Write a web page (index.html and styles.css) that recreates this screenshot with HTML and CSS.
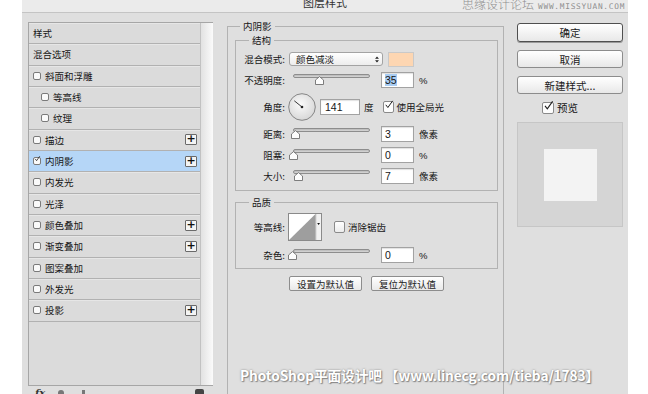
FILE: index.html
```html
<!DOCTYPE html>
<html lang="zh-CN">
<head>
    <meta charset="UTF-8">
    <meta name="viewport" content="width=device-width, initial-scale=1.0">
    <title>图层样式</title>
    <link rel="stylesheet" href="styles.css">
</head>
<body>
    <div class="dialog">
        <div class="titlebar"><div class="title">图层样式</div></div>
        <div class="site-mark"><span class="site-cn">思缘设计论坛</span><span class="site-en">WWW.MISSYUAN.COM</span></div>

        <div class="main">
            <!-- effect list -->
            <div class="side">
                <div class="list">
                    <div class="items">
                        <div class="item">样式</div>
                        <div class="item">混合选项</div>
                        <div class="item"><span class="cb"></span>斜面和浮雕</div>
                        <div class="item sub"><span class="cb"></span>等高线</div>
                        <div class="item sub"><span class="cb"></span>纹理</div>
                        <div class="item"><span class="cb"></span>描边<span class="plus">+</span></div>
                        <div class="item active"><span class="cb"><svg class="tick" viewBox="0 0 10 10"><path d="M2 4.8 L4.3 7.8 L9.6 0.4"/></svg></span>内阴影<span class="plus">+</span></div>
                        <div class="item"><span class="cb"></span>内发光</div>
                        <div class="item"><span class="cb"></span>光泽</div>
                        <div class="item"><span class="cb"></span>颜色叠加<span class="plus">+</span></div>
                        <div class="item"><span class="cb"></span>渐变叠加<span class="plus">+</span></div>
                        <div class="item"><span class="cb"></span>图案叠加</div>
                        <div class="item"><span class="cb"></span>外发光</div>
                        <div class="item"><span class="cb"></span>投影<span class="plus">+</span></div>
                    </div>
                    <div class="scroll"></div>
                </div>
                <div class="foot">
                    <span class="fx">fx</span>
                    <span class="ico up"></span>
                    <span class="ico bar"></span>
                    <span class="ico trash"></span>
                </div>
            </div>

            <!-- settings -->
            <div class="center">
                <fieldset class="group outer">
                    <legend>内阴影</legend>

                    <fieldset class="group">
                        <legend class="sub-legend">结构</legend>
                        <div class="row">
                            <span class="label">混合模式:</span>
                            <span class="select">颜色减淡
                                <svg class="arrows" viewBox="0 0 5 9"><path d="M0 3.5 L2.5 0.5 L5 3.5 Z M0 5.5 L2.5 8.5 L5 5.5 Z"/></svg>
                            </span>
                            <span class="swatch"></span>
                        </div>
                        <div class="row">
                            <span class="label">不透明度:</span>
                            <div class="slider">
                                <svg class="thumb" style="left: 22px" viewBox="0 0 9 9"><path d="M0.5 8.5 V4 L4.5 0.6 L8.5 4 V8.5 Z"/></svg>
                            </div>
                            <span class="num"><span class="hl">35</span></span>
                            <span class="unit">%</span>
                        </div>
                        <div class="row tall">
                            <span class="label">角度:</span>
                            <svg class="dial" viewBox="0 0 28 28">
                                <defs>
                                    <radialGradient id="dialFill" cx="0.45" cy="0.4" r="0.7">
                                        <stop offset="0" stop-color="#fbfbfb"/>
                                        <stop offset="1" stop-color="#d2d2d2"/>
                                    </radialGradient>
                                </defs>
                                <circle cx="14" cy="14" r="13.3" fill="url(#dialFill)" stroke="#7c7c7c" stroke-width="0.9"/>
                                <line x1="14" y1="14" x2="6.3" y2="7.8" stroke="#222" stroke-width="0.9"/>
                                <circle cx="14" cy="14" r="1.3" fill="#222"/>
                            </svg>
                            <span class="num wide">141</span>
                            <span class="unit deg">度</span>
                            <span class="check"><svg class="tick" viewBox="0 0 10 10"><path d="M2 4.8 L4.3 7.8 L9.6 0.4"/></svg></span>
                            <span class="check-text">使用全局光</span>
                        </div>
                        <div class="row">
                            <span class="label">距离:</span>
                            <div class="slider">
                                <svg class="thumb" style="left: -2px" viewBox="0 0 9 9"><path d="M0.5 8.5 V4 L4.5 0.6 L8.5 4 V8.5 Z"/></svg>
                            </div>
                            <span class="num">3</span>
                            <span class="unit">像素</span>
                        </div>
                        <div class="row">
                            <span class="label">阻塞:</span>
                            <div class="slider">
                                <svg class="thumb" style="left: -4px" viewBox="0 0 9 9"><path d="M0.5 8.5 V4 L4.5 0.6 L8.5 4 V8.5 Z"/></svg>
                            </div>
                            <span class="num">0</span>
                            <span class="unit">%</span>
                        </div>
                        <div class="row">
                            <span class="label">大小:</span>
                            <div class="slider">
                                <svg class="thumb" style="left: 1px" viewBox="0 0 9 9"><path d="M0.5 8.5 V4 L4.5 0.6 L8.5 4 V8.5 Z"/></svg>
                            </div>
                            <span class="num">7</span>
                            <span class="unit">像素</span>
                        </div>
                    </fieldset>

                    <fieldset class="group quality">
                        <legend class="sub-legend">品质</legend>
                        <div class="row tall">
                            <span class="label">等高线:</span>
                            <svg class="contour" viewBox="0 0 34 28">
                                <rect x="0.5" y="0.5" width="33" height="27" fill="#fff" stroke="#8a8a8a"/>
                                <polygon points="1,27 27.5,1 27.5,27" fill="#9e9e9e"/>
                                <rect x="28" y="1" width="5" height="26" fill="#f1f1f1"/>
                                <line x1="27.8" y1="1" x2="27.8" y2="27" stroke="#9a9a9a" stroke-width="0.6"/>
                                <polygon points="29.2,10 32,10 30.6,12" fill="#111"/>
                            </svg>
                            <span class="check empty"></span>
                            <span class="check-text">消除锯齿</span>
                        </div>
                        <div class="row">
                            <span class="label">杂色:</span>
                            <div class="slider">
                                <svg class="thumb" style="left: -5px" viewBox="0 0 9 9"><path d="M0.5 8.5 V4 L4.5 0.6 L8.5 4 V8.5 Z"/></svg>
                            </div>
                            <span class="num">0</span>
                            <span class="unit">%</span>
                        </div>
                    </fieldset>

                    <div class="defaults">
                        <button class="small-btn">设置为默认值</button>
                        <button class="small-btn">复位为默认值</button>
                    </div>
                </fieldset>
            </div>

            <!-- buttons and preview -->
            <div class="actions">
                <button class="btn primary">确定</button>
                <button class="btn">取消</button>
                <button class="btn">新建样式...</button>
                <div class="preview-toggle">
                    <span class="check big"><svg class="tick" viewBox="0 0 10 10"><path d="M2 4.8 L4.3 7.8 L9.6 0.4"/></svg></span>
                    <span>预览</span>
                </div>
                <div class="preview">
                    <div class="preview-square"></div>
                </div>
            </div>
        </div>

        <div class="watermark">PhotoShop平面设计吧 【www.linecg.com/tieba/1783】</div>
    </div>
</body>
</html>
```

FILE: styles.css
```css
body {
    margin: 0;
    background: #fff;
    font-family: "Noto Sans CJK SC", sans-serif;
    font-size: 9.5px;
    color: #161616;
}
.dialog {
    position: relative;
    width: 606px;
    height: 394px;
    margin-left: 22px;
    background: #dfdfdf;
    overflow: hidden;
}

/* title bar */
.titlebar {
    height: 12px;
    border-bottom: 1px solid #c4c4c4;
    background: #ebebeb;
    overflow: hidden;
    text-align: center;
}
.title {
    margin-top: -5px;
    font-size: 11px;
    line-height: 15px;
    color: #333;
}
.site-mark {
    position: absolute;
    top: -4px;
    left: 440px;
    color: #8f8f8f;
    white-space: nowrap;
}
.site-cn {
    font-size: 12px;
    line-height: 16px;
    font-weight: 300;
}
.site-en {
    margin-left: 4px;
    font-family: "DejaVu Sans Mono", monospace;
    font-size: 7.8px;
    letter-spacing: 0.75px;
}

.main {
    display: flex;
    height: 381px;
}

/* left list */
.side {
    width: 185px;
    padding: 9px 0 0 6px;
    flex-shrink: 0;
}
.list {
    display: flex;
    height: 364px;
    box-sizing: border-box;
    border: 1px solid #a6a6a6;
    border-right: none;
    background: #dbdbdb;
}
.items {
    flex: 1;
    display: flex;
    flex-direction: column;
}
.item {
    display: flex;
    align-items: center;
    height: 21.33px;
    flex-shrink: 0;
    box-sizing: border-box;
    padding: 0 3px 0 4px;
    border-bottom: 1px solid #b1b1b1;
    box-shadow: inset 0 1px 0 #e6e6e6;
    white-space: nowrap;
}
.item.sub {
    padding-left: 12px;
}
.item.active {
    background: #b5d6f7;
    box-shadow: none;
}
.cb {
    position: relative;
    width: 8px;
    height: 8px;
    margin-right: 4px;
    box-sizing: border-box;
    border: 1px solid #7a7a7a;
    border-radius: 2px;
    background: #fafafa;
}
.tick {
    position: absolute;
    left: 0;
    top: -2px;
    width: 100%;
    height: 100%;
    overflow: visible;
    fill: none;
    stroke: #1e1e1e;
    stroke-width: 1.3;
}
.plus {
    margin-left: auto;
    width: 12px;
    height: 11px;
    box-sizing: border-box;
    border: 1px solid #6a6a6a;
    border-radius: 1px;
    background: #f4f4f4;
    font-family: "DejaVu Sans", sans-serif;
    font-weight: bold;
    font-size: 11px;
    line-height: 8px;
    text-align: center;
    color: #111;
}
.scroll {
    width: 12px;
    border-left: 1px solid #c2c2c2;
    background: linear-gradient(to right, #e2e2e2, #fbfbfb);
}
.foot {
    display: flex;
    align-items: flex-start;
    padding: 2px 0 0 7px;
}
.fx {
    font-family: "DejaVu Serif", serif;
    font-style: italic;
    font-weight: bold;
    font-size: 10px;
    line-height: 10px;
    color: #333;
}
.ico {
    background: #777;
}
.ico.up {
    width: 6px;
    height: 6px;
    margin: 2px 0 0 13px;
    border-radius: 3px 3px 0 0;
}
.ico.bar {
    width: 3px;
    height: 6px;
    margin: 2px 0 0 18px;
}
.ico.trash {
    width: 9px;
    height: 6px;
    margin: 1px 0 0 110px;
    border-radius: 2px 2px 0 0;
    background: #444;
}

/* settings groups */
.center {
    width: 277px;
    padding: 7px 0 0 14px;
    flex-shrink: 0;
}
.group {
    margin: 0;
    padding: 5px 0 1px 0;
    border: 1px solid #b2b2b2;
    min-width: 0;
}
.group legend {
    margin-left: 5px;
    padding: 0 3px;
    line-height: 12px;
}
.group .sub-legend {
    margin-left: 13px;
}
.group.outer {
    height: 400px;
    box-sizing: border-box;
    padding: 2px 5px 0 7px;
}
.group.quality {
    margin-top: 5px;
    padding-bottom: 0;
}
.row {
    display: flex;
    align-items: center;
    height: 16px;
    margin-bottom: 5px;
}
.quality .row.tall {
    margin-bottom: 6px;
}
.row.tall {
    height: 28px;
}
.label {
    width: 49px;
    text-align: right;
    flex-shrink: 0;
}
.select {
    display: flex;
    align-items: center;
    width: 94px;
    height: 14px;
    margin-left: 4px;
    padding-left: 6px;
    box-sizing: border-box;
    border: 1px solid #a3a3a3;
    border-radius: 3px;
    background: linear-gradient(#ffffff, #ededed);
}
.arrows {
    width: 4px;
    height: 7px;
    margin-left: auto;
    margin-right: 3px;
    fill: #222;
}
.swatch {
    width: 26px;
    height: 15px;
    margin-left: 5px;
    box-sizing: border-box;
    border: 1px solid #c9c9c9;
    background: #fdd6b2;
}
.slider {
    position: relative;
    width: 77px;
    height: 16px;
    margin-left: 8px;
}
.slider::before {
    content: "";
    position: absolute;
    left: 0;
    right: 0;
    top: 2px;
    height: 4px;
    box-sizing: border-box;
    border: 1px solid #8d8d8d;
    border-radius: 2px;
    background: linear-gradient(#b8b8b8, #d8d8d8);
}
.thumb {
    position: absolute;
    top: 4px;
    width: 9px;
    height: 9px;
    fill: #fdfdfd;
    stroke: #6f6f6f;
    stroke-width: 0.9;
}
.num {
    display: flex;
    align-items: center;
    width: 33px;
    height: 16px;
    margin-left: 11px;
    padding-left: 3px;
    box-sizing: border-box;
    border: 1px solid #a2a2a2;
    background: #fff;
    box-shadow: inset 0 1px 1px rgba(0, 0, 0, 0.12);
    font-family: "Liberation Sans", sans-serif;
    font-size: 10.5px;
}
.num.wide {
    width: 40px;
    margin-left: 4px;
    padding-left: 4px;
}
.hl {
    background: #a9cdf3;
}
.unit {
    margin-left: 5px;
    font-family: "Liberation Sans", "Noto Sans CJK SC", sans-serif;
}
.unit.deg {
    margin-left: 4px;
}
.dial {
    width: 28px;
    height: 28px;
    margin-left: 3px;
}
.check {
    position: relative;
    width: 11px;
    height: 12px;
    margin-left: 9px;
    box-sizing: border-box;
    border: 1px solid #8a8a8a;
    border-radius: 2px;
    background: #fdfdfd;
}
.check .tick {
    stroke-width: 1.1;
}
.check.empty {
    margin-left: 12px;
    background: linear-gradient(#fff, #ececec);
}
.check-text {
    margin-left: 3px;
}
.contour {
    width: 34px;
    height: 28px;
    margin-left: 3px;
}
.defaults {
    display: flex;
    justify-content: center;
    gap: 9px;
    margin-top: 7px;
}
.small-btn {
    width: 73px;
    height: 15px;
    padding: 0;
    border: 1px solid #8d8d8d;
    border-radius: 2px;
    background: linear-gradient(#ffffff, #e9e9e9);
    font-family: "Noto Sans CJK SC", sans-serif;
    font-size: 9.5px;
    line-height: 12px;
    color: #222;
}

/* right column */
.actions {
    width: 106px;
    padding: 10px 5px 0 13px;
    flex-shrink: 0;
}
.btn {
    display: block;
    width: 106px;
    height: 18px;
    margin-bottom: 8px;
    padding: 0;
    border: 1px solid #8c8c8c;
    border-radius: 3px;
    background: linear-gradient(#ffffff, #e8e8e8);
    font-family: "Noto Sans CJK SC", sans-serif;
    font-size: 10.5px;
    line-height: 15px;
    color: #1a1a1a;
}
.btn.primary {
    height: 19px;
    border-color: #4f4f4f;
    box-shadow: 0 1px 0 #9a9a9a;
}
.preview-toggle {
    display: flex;
    align-items: center;
    height: 13px;
    margin: -1px 0 8px 25px;
    font-size: 10.5px;
}
.check.big {
    width: 12px;
    height: 12px;
    margin: 0 3px 0 0;
}
.preview {
    display: flex;
    align-items: center;
    justify-content: center;
    height: 105px;
    box-sizing: border-box;
    border: 1px solid #c6c6c6;
    background: #d5d5d5;
}
.preview-square {
    width: 53px;
    height: 52px;
    background: #f3f3f3;
}

.watermark {
    position: absolute;
    left: 218px;
    top: 367px;
    font-family: "Noto Sans CJK SC", sans-serif;
    font-weight: bold;
    font-size: 13.7px;
    letter-spacing: -0.1px;
    line-height: 16px;
    color: #fff;
    white-space: nowrap;
    text-shadow: 0 0 2px #7a7a7a, 1px 1px 1px #8a8a8a;
}
```
